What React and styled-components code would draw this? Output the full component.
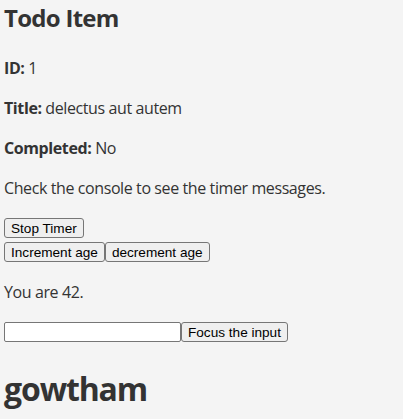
import React, { useRef, useState } from "react";
import styled, { createGlobalStyle } from "styled-components";

const GlobalStyle = createGlobalStyle`
  body {
    margin: 0;
    background: #f4f4f4;
    color: #333;
    font-family: "Open Sans", "Noto Sans", sans-serif;
    line-height: 1.5;
    letter-spacing: -0.025em;
  }
`;

const Page = styled.main`
  padding: 0 4px;
`;

const Heading = styled.h2`
  margin: 0 0 20px;
  font-size: 24px;
  font-weight: 700;
  letter-spacing: -0.03em;
`;

const Paragraph = styled.p`
  margin: 16px 0;
  font-size: 16px;
`;

const Row = styled.div`
  display: flex;
  align-items: center;
  height: 24px;
`;

const Button = styled.button`
  font-family: "Liberation Sans", Arial, sans-serif;
  font-size: 13.6px;
  letter-spacing: 0;
  color: #000;
  background: #efefef;
  border: 1px solid #767676;
  border-radius: 3px;
  padding: 1px 6px;
  height: 20px;
  margin: 0;
`;

const Input = styled.input`
  box-sizing: border-box;
  width: 177px;
  height: 20px;
  margin: 0;
  padding: 1px 2px;
  border: 1px solid #767676;
  border-radius: 2px;
  background: #fff;
  font-family: "Liberation Sans", Arial, sans-serif;
  font-size: 13.33px;
`;

const Name = styled.h1`
  margin: 21px 0;
  font-size: 32px;
  font-weight: 700;
  letter-spacing: -0.035em;
`;

export default function App() {
  const [age, setAge] = useState(42);
  const inputRef = useRef(null);
  const todo = { id: 1, title: "delectus aut autem", completed: false };

  return (
    <Page>
      <GlobalStyle />
      <Heading>Todo Item</Heading>
      <Paragraph>
        <strong>ID:</strong> {todo.id}
      </Paragraph>
      <Paragraph>
        <strong>Title:</strong> {todo.title}
      </Paragraph>
      <Paragraph>
        <strong>Completed:</strong> {todo.completed ? "Yes" : "No"}
      </Paragraph>
      <Paragraph>Check the console to see the timer messages.</Paragraph>
      <Row>
        <Button>Stop Timer</Button>
      </Row>
      <Row>
        <Button onClick={() => setAge((a) => a + 1)}>Increment age</Button>
        <Button onClick={() => setAge((a) => a - 1)}>decrement age</Button>
      </Row>
      <Paragraph>You are {age}.</Paragraph>
      <Row>
        <Input ref={inputRef} />
        <Button onClick={() => inputRef.current && inputRef.current.focus()}>
          Focus the input
        </Button>
      </Row>
      <Name>gowtham</Name>
    </Page>
  );
}
